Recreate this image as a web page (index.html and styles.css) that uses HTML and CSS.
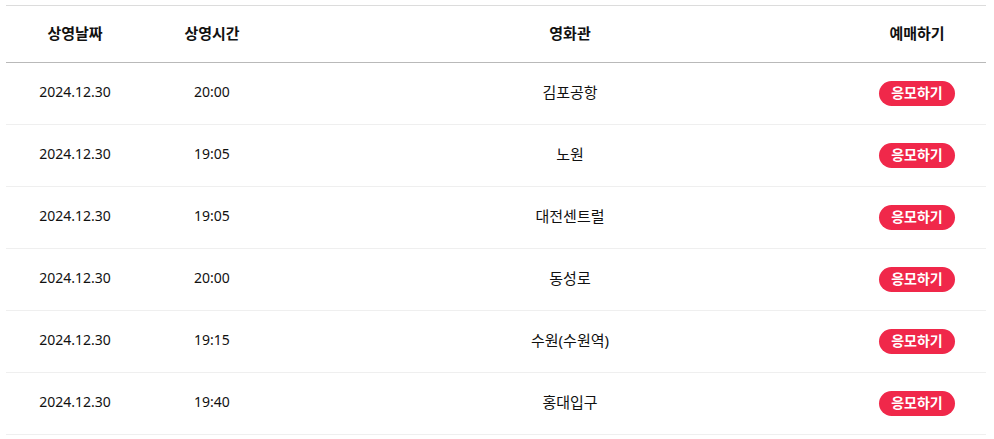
FILE: index.html
```html
<!DOCTYPE html>
<html lang="ko">
<head>
<meta charset="utf-8">
<title>상영일정</title>
<link rel="stylesheet" href="styles.css">
</head>
<body>
<div class="table">
  <div class="row head">
    <div class="c1">상영날짜</div>
    <div class="c2">상영시간</div>
    <div class="c3">영화관</div>
    <div class="c4">예매하기</div>
  </div>
  <div class="row">
    <div class="c1">2024.12.30</div><div class="c2">20:00</div><div class="c3">김포공항</div><div class="c4"><span class="btn">응모하기</span></div>
  </div>
  <div class="row">
    <div class="c1">2024.12.30</div><div class="c2">19:05</div><div class="c3">노원</div><div class="c4"><span class="btn">응모하기</span></div>
  </div>
  <div class="row">
    <div class="c1">2024.12.30</div><div class="c2">19:05</div><div class="c3">대전센트럴</div><div class="c4"><span class="btn">응모하기</span></div>
  </div>
  <div class="row">
    <div class="c1">2024.12.30</div><div class="c2">20:00</div><div class="c3">동성로</div><div class="c4"><span class="btn">응모하기</span></div>
  </div>
  <div class="row">
    <div class="c1">2024.12.30</div><div class="c2">19:15</div><div class="c3">수원(수원역)</div><div class="c4"><span class="btn">응모하기</span></div>
  </div>
  <div class="row">
    <div class="c1">2024.12.30</div><div class="c2">19:40</div><div class="c3">홍대입구</div><div class="c4"><span class="btn">응모하기</span></div>
  </div>
</div>
</body>
</html>
```
FILE: styles.css
```css
html, body {
  margin: 0;
  padding: 0;
  background: #fff;
}
body {
  font-family: "Noto Sans", "Noto Sans CJK KR", sans-serif;
  color: #111;
  font-size: 15px;
}
.table {
  width: 980px;
  margin: 5px 0 0 6px;
  border-top: 1px solid #dcdcdc;
}
.row {
  display: grid;
  grid-template-columns: 138px 136px 580px 126px;
  height: 61px;
  border-bottom: 1px solid #efefef;
  align-items: center;
  text-align: center;
}
.row > div {
  line-height: 20px;
  padding-bottom: 3px;
}
.row > .c1,
.row > .c2 {
  font-size: 14px;
}
.row.head > .c1,
.row.head > .c2 {
  font-size: 15px;
}
.row.head {
  height: 56px;
  border-bottom: 1px solid #b9b9b9;
  font-weight: 700;
}
.c4 {
  display: flex;
  justify-content: center;
  padding-right: 12px;
}
.row > .c4 {
  padding-bottom: 0;
}
.row.head > .c4 {
  padding-bottom: 3px;
}
.btn {
  display: inline-flex;
  align-items: center;
  justify-content: center;
  width: 76px;
  height: 25px;
  padding-bottom: 1px;
  box-sizing: border-box;
  border-radius: 13px;
  background: #f0284a;
  color: #fff;
  font-weight: 700;
  font-size: 14px;
  line-height: 20px;
}
```
